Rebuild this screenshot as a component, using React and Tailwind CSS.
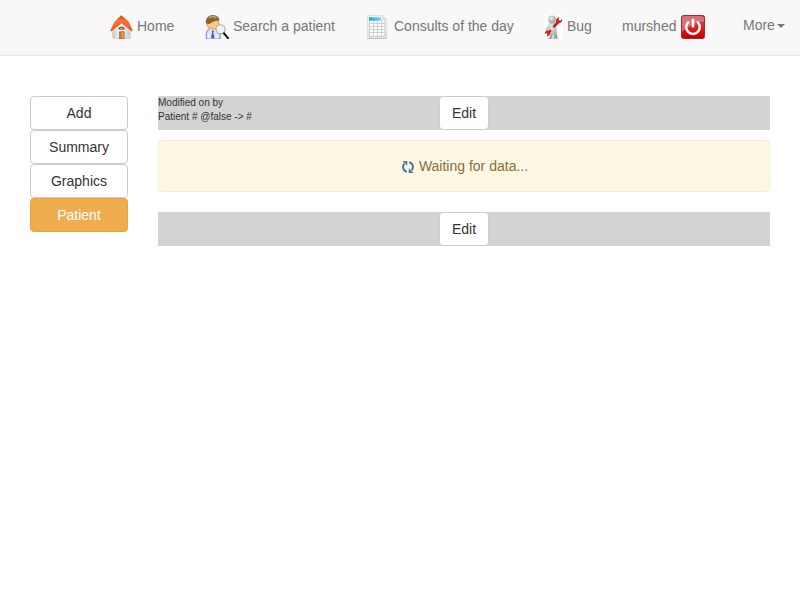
function HomeIcon() {
  return (
    <svg className="mt-[3px] h-6 w-6 shrink-0" viewBox="0 0 24 24">
      <defs>
        <linearGradient id="roof" x1="0" y1="0" x2="0" y2="1">
          <stop offset="0" stopColor="#d8460f" />
          <stop offset=".35" stopColor="#f9713a" />
          <stop offset="1" stopColor="#e8541d" />
        </linearGradient>
        <linearGradient id="wall" x1="0" y1="0" x2="1" y2="0">
          <stop offset="0" stopColor="#c4c4c0" />
          <stop offset=".4" stopColor="#f7f6f2" />
          <stop offset="1" stopColor="#cfcfcb" />
        </linearGradient>
      </defs>
      <path d="M3.5 14 12.5 7l8.7 7v9.3l-8.3.7-9-.8z" fill="url(#wall)" stroke="#b9b8b4" strokeWidth=".5" />
      <path d="M12.2.3 19.3 6 23.7 15.3 22.6 16.6 12.6 8.6 2.4 16.6 1.2 15.4 5.7 6.5z" fill="url(#roof)" />
      <path d="M12.6 9 2.7 16.8M12.6 9 22.4 16.8" stroke="#fbe7dc" strokeWidth=".9" />
      <path d="M9.4 13.3c.5-2.1 5.6-2.1 6.4 0l-.9 1.2h-4.7z" fill="#6a3a28" />
      <path d="M11 13.2h3" stroke="#e0b080" />
      <path d="M10.5 16.8h4.6v7l-4.6-.1z" fill="#cf7c33" stroke="#8a5a35" strokeWidth=".7" />
      <path d="M13 17.3h1.4v6H13z" fill="#f3ac60" />
    </svg>
  );
}

function SearchPatientIcon() {
  return (
    <svg className="mt-[3px] h-6 w-6 shrink-0" viewBox="0 0 24 24">
      <path d="M1.3 24v-5.3c0-3.4 2.6-5 5.8-5 4.5 0 8 1.2 8 5V24z" fill="#dfe1fc" stroke="#7373bf" strokeWidth=".9" />
      <path d="M5 14h5l-2.3 4zM4 19.5v4M12 19.5v4" fill="#fff" stroke="#fff" />
      <path d="m7.7 14.5 1.2 1.7-.6 1.2 1.1 4.8-1.7 1.6-1.6-1.6 1.1-4.8-.6-1.2z" fill="#5054b0" />
      <ellipse cx="7.8" cy="8" rx="6.2" ry="6.2" fill="#ffc68a" stroke="#c27c3c" strokeWidth=".7" />
      <path d="M1.3 7.7C.8 3 3.8.4 8 .4c4 0 6.3 2.7 5.8 4.8C10.5 4.8 6.5 7 5 8.2c-1.1.6-2.6.4-3.7-.5z" fill="#8c642f" stroke="#664520" strokeWidth=".6" />
      <path d="M4 2.9c2-1.8 5.6-1.7 7.2 0" stroke="#c9aa7c" strokeWidth="1.5" fill="none" />
      <circle cx="15.6" cy="14.3" r="4.6" fill="#eef1f4" fillOpacity=".95" stroke="#a5a8ac" strokeWidth="1.1" />
      <path d="M12.9 13.7c.4-1.6 1.6-2.2 3-2.1" stroke="#fff" strokeWidth="1.3" fill="none" />
      <path d="m18.4 17.6 5.2 6.2" stroke="#111" strokeWidth="2.1" />
    </svg>
  );
}

function TableIcon() {
  return (
    <svg className="mt-[3px] h-6 w-6 shrink-0" viewBox="0 0 24 24">
      <defs>
        <linearGradient id="tableHead">
          <stop offset="0" stopColor="#16a0ee" />
          <stop offset="1" stopColor="#7cd4fb" />
        </linearGradient>
        <linearGradient id="paper" x1="0" y1="0" x2="0" y2="1">
          <stop stopColor="#fafafa" />
          <stop offset="1" stopColor="#e2e2e2" />
        </linearGradient>
      </defs>
      <path d="M2.5.5h14.8l4.4 4.4v18.4H2.3z" fill="url(#paper)" stroke="#d6d6d6" strokeWidth=".7" />
      <path d="M17.3.7v4.2h4.4z" fill="#ececec" stroke="#cbcbcb" strokeWidth=".6" />
      <path d="M4 5.5h16v15.8H4z" fill="#fff" />
      <path d="M4.5 5.5v16M8.5 5.5v16M12.5 5.5v16M16.5 5.5v16M19.8 5.5v16M4 8.5h16M4 11.5h16M4 14.5h16M4 17.5h16M4 21.2h16" fill="none" stroke="#c4ccd2" strokeWidth=".9" />
      <path d="M4 2.3h12v3.4H4z" fill="url(#tableHead)" />
      <path d="M2 23.6h20" stroke="#bcbcbc" strokeWidth=".8" />
    </svg>
  );
}

function BugIcon() {
  return (
    <svg className="mt-[3px] h-6 w-5 shrink-0" viewBox="0 0 20 24">
      <defs>
        <radialGradient id="figure" cx=".4" cy=".3" r=".8">
          <stop stopColor="#eee" />
          <stop offset="1" stopColor="#909090" />
        </radialGradient>
      </defs>
      <path d="M1 0h19v25H1z" fill="#fff" />
      <ellipse cx="10" cy="23.4" rx="6.5" ry=".7" fill="#cfcfcf" />
      <path d="M6.8 8.5 12 8.2l3.2-2.4 1.8 1.6-4 4.3.3 3.8 1.1 7.3-3 .6-1.4-6.6-1.1 6.6H6.6l.9-9-.7-2.8-2.3 4.6-1.8-.9z" fill="url(#figure)" stroke="#9b9b9b" strokeWidth=".4" />
      <circle cx="9" cy="4.5" r="3.7" fill="url(#figure)" stroke="#ababab" strokeWidth=".4" />
      <path d="m10.3 12.2 4.8-5.4M5.2 17.8l2.5-2.7" stroke="#cb2020" strokeWidth="2.5" />
      <path d="M13.2 7.2c-.8-2.7.7-4.7 3.4-5.2l-1.2 2.5 1.5 1.2 2.3-1.4c.2 2.9-2.2 4.5-5.2 3.8z" fill="#d02020" />
      <path d="M6.6 16.3c1.5 2.5-.3 4.9-3 5.2l1-2.3-1.2-1.1-1.8.9c0-2.8 2-4.2 5-2.7z" fill="#cb1c1c" />
    </svg>
  );
}

function PowerIcon() {
  return (
    <svg className="mt-[3px] ml-[0.5px] h-6 w-6 shrink-0" viewBox="0 0 24 24">
      <defs>
        <linearGradient id="power" x1="0" y1="0" x2="0" y2="1">
          <stop offset="0" stopColor="#b83c3e" />
          <stop offset=".4" stopColor="#d83336" />
          <stop offset=".7" stopColor="#df0c0f" />
          <stop offset="1" stopColor="#bd0009" />
        </linearGradient>
      </defs>
      <rect x=".5" y=".5" width="23" height="23" rx="2" fill="url(#power)" stroke="#a9282a" />
      <path d="M1 2.5Q1.5 1 4 1h16q2 0 3 1.5v4Q11 7 1 17z" fill="#fff" opacity=".3" />
      <path d="M7.2 7.3a6.8 6.8 0 1 0 9.6 0" fill="none" stroke="#fff" strokeWidth="2.5" strokeLinecap="round" />
      <path d="M12 5v6.3" stroke="#fff" strokeWidth="2.7" strokeLinecap="round" />
    </svg>
  );
}

function RefreshIcon() {
  return (
    <svg className="mt-0.5 mr-[5px] h-3 w-3" viewBox="0 0 12 12">
      <path d="M4.8 10.8C1 9.8-.1 5 2.5 2.5M7.2 1.2C11 2.2 12.1 7 9.5 9.5" fill="none" stroke="#557895" strokeWidth="2" />
      <path d="M.5 0h4.8v4.8zM11.5 12H6.7V7.2z" fill="#557895" />
    </svg>
  );
}

const menu = ["Add", "Summary", "Graphics", "Patient"];

function EditButton() {
  return (
    <button className="h-[34px] w-[50px] rounded border border-[#ccc] bg-white text-[#333]">Edit</button>
  );
}

export default function App() {
  return (
    <div className="min-h-[600px] bg-white font-['Liberation_Sans',sans-serif] text-sm leading-5 text-[#333]">
      <nav className="flex h-14 items-start border-b border-[#e7e7e7] bg-[#f8f8f8] pt-3 pl-[109px] whitespace-nowrap text-[#777]">
        <a className="flex w-24 gap-1 leading-[29px]"><HomeIcon />Home</a>
        <a className="flex w-40 gap-1 leading-[29px]"><SearchPatientIcon />Search a patient</a>
        <a className="flex w-[178px] gap-[5px] leading-[29px]"><TableIcon />Consults of the day</a>
        <a className="flex w-[79px] gap-1 leading-[29px]"><BugIcon />Bug</a>
        <a className="flex w-[121px] gap-1 leading-[29px]">murshed<PowerIcon /></a>
        <a className="flex items-start leading-[27px]">
          More
          <span className="mt-3 ml-0.5 border-x-4 border-t-4 border-x-transparent border-t-[#777]" />
        </a>
      </nav>
      <main className="flex gap-[30px] px-[30px] pt-10">
        <aside className="flex w-[98px] flex-col">
          {menu.map((name) => (
            <button
              key={name}
              className={name === "Patient"
                ? "h-[34px] rounded border border-[#eea236] bg-[#f0ad4e] text-white"
                : "h-[34px] rounded border border-[#ccc] bg-white text-[#333]"}
            >
              {name}
            </button>
          ))}
        </aside>
        <section className="flex-1">
          <div className="grid h-[34px] grid-cols-[281px_50px_1fr] bg-[#d3d3d3]">
            <p className="text-[10px] leading-[14px]">Modified on by<br />Patient # @false -&gt; #</p>
            <EditButton />
          </div>
          <div className="mt-2.5 flex h-[52px] items-center justify-center rounded border border-[#faebcc] bg-[#fcf8e3] pl-0.5 text-[#8a6d3b]">
            <RefreshIcon />Waiting for data...
          </div>
          <div className="mt-5 flex h-[34px] bg-[#d3d3d3] pl-[281px]">
            <EditButton />
          </div>
        </section>
      </main>
    </div>
  );
}
